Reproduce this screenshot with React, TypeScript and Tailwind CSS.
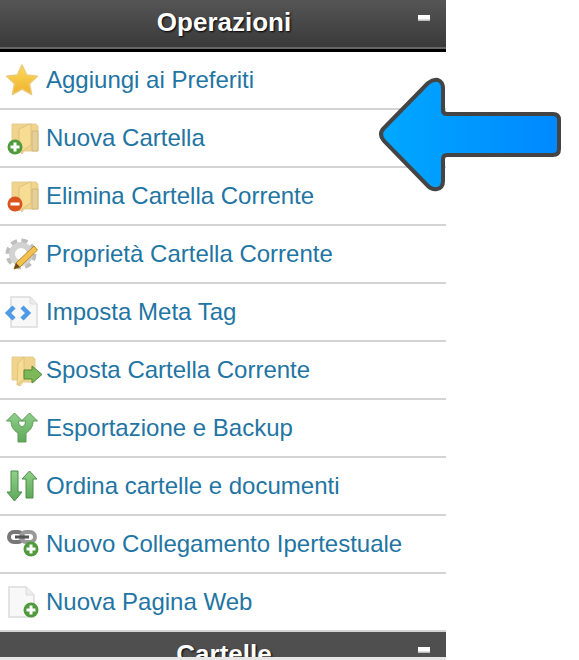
const Badge = ({ cx, cy, color, minus }: { cx: number; cy: number; color: string; minus?: boolean }) => (
  <g>
    <circle cx={cx} cy={cy} r="7.500" fill={color} />
    <rect x={cx - 4.500} y={cy - 1.500} width="9" height="3" fill="#fff" />
    {!minus && <rect x={cx - 1.500} y={cy - 4.500} width="3" height="9" fill="#fff" />}
  </g>
);

const Folder = () => (
  <g>
    <path d="M6 2h24l2 2v25H18l-2 3-1-1V26H6z" fill="#f0d48c" stroke="#e3cc94" strokeWidth="1" />
    <path d="M26 9h6v20H26z" fill="#e6cf96" stroke="#c9b27a" strokeWidth="0.800" />
    <path d="M13 7l11-5h1v21l-12 8z" fill="#f7dc94" stroke="#d9bd78" strokeWidth="0.800" />
  </g>
);

const Star = () => (
  <svg width="32" height="32" viewBox="0 0 32 32" className="overflow-visible">
    <path d="M16 1l4.700 10 10.700 1.300-7.900 7.400 2.100 10.800L16 25.200 6.400 30.500l2.100-10.800L.6 12.300 11.300 11z" fill="url(#star)" stroke="#eccb78" strokeWidth="1.500" strokeLinejoin="round" />
  </svg>
);

const NewFolder = ({ minus }: { minus?: boolean }) => (
  <svg width="32" height="32" viewBox="0 0 32 32" className="overflow-visible">
    <Folder />
    <Badge cx={9} cy={minus ? 24 : 25} color={minus ? "#d9541e" : "#4f9a3c"} minus={minus} />
  </svg>
);

const Gear = () => (
  <svg width="32" height="32" viewBox="0 0 32 32" className="overflow-visible">
    <circle cx="15" cy="16" r="13" fill="none" stroke="#bdbdbd" strokeWidth="5" strokeDasharray="6 4.200" />
    <circle cx="15" cy="16" r="9" fill="none" stroke="#d2d2d2" strokeWidth="6" />
    <path d="M28 8l3.500 4L14 29l-6 2 2-6z" fill="#f2c14e" stroke="#b98a25" strokeWidth="1" strokeLinejoin="round" />
    <path d="M8 31l2-6 4 4z" fill="#6b4a1e" />
  </svg>
);

const MetaPage = () => (
  <svg width="32" height="32" viewBox="0 0 32 32" className="overflow-visible">
    <path d="M5 1h19l7 7v23H5z" fill="#f8f8f8" stroke="#dcdcdc" strokeWidth="1.500" />
    <path d="M24 1v7h7" fill="#ececec" stroke="#dcdcdc" strokeWidth="1" />
    <path d="M8 11l-6 6 6 6M16 11l6 6-6 6" fill="none" stroke="#4f9be8" strokeWidth="4.500" />
  </svg>
);

const MoveFolder = () => (
  <svg width="32" height="32" viewBox="0 0 32 32" className="overflow-visible">
    <path d="M6 3h21l2 2v23H17l-3 4-2-1v-5H6z" fill="#f0d48c" stroke="#e3cc94" strokeWidth="1" />
    <path d="M12 9l-1 22 6-5h1V3z" fill="#f7dc94" stroke="#d9bd78" strokeWidth="0.800" />
    <path d="M18 16h8v-4l10 8.500-10 8.500v-4h-8z" fill="#7cb85a" stroke="#4d8a35" strokeWidth="1" strokeLinejoin="round" />
  </svg>
);

const Fork = () => (
  <svg width="32" height="32" viewBox="0 0 32 32" className="overflow-visible">
    <path d="M8.500 1L.5 9h4.500c0 5 2 9 7 12v9h8v-9c5-3 7-7 7-12h4.500l-8-8-8 8h4c0 3-1 5-3.500 6-2.500-1-3.500-3-3.500-6h4z" fill="url(#green)" stroke="#5d9a58" strokeWidth="1" strokeLinejoin="round" />
  </svg>
);

const Sort = () => (
  <svg width="32" height="32" viewBox="0 0 32 32" className="overflow-visible">
    <path d="M5 1h7v21h4L8.500 31 1 22h4z" fill="url(#green)" stroke="#4a8c45" strokeWidth="1" strokeLinejoin="round" />
    <path d="M20 28h7V9h4l-7.500-8L16 9h4z" fill="url(#green)" stroke="#4a8c45" strokeWidth="1" strokeLinejoin="round" />
  </svg>
);

const Link = () => (
  <svg width="32" height="32" viewBox="0 0 32 32" className="overflow-visible">
    <rect x="3" y="4" width="14" height="10" rx="5" fill="none" stroke="#777" strokeWidth="4" />
    <rect x="15" y="4" width="14" height="10" rx="5" fill="none" stroke="#999" strokeWidth="4" />
    <rect x="9" y="7.500" width="14" height="3" fill="#555" />
    <Badge cx={25} cy={21} color="#4f9a3c" />
  </svg>
);

const NewPage = () => (
  <svg width="32" height="32" viewBox="0 0 32 32" className="overflow-visible">
    <path d="M3 1h17l8 8v22H3z" fill="#f8f8f8" stroke="#dcdcdc" strokeWidth="1.500" />
    <path d="M20 1v8h8" fill="#ececec" stroke="#dcdcdc" strokeWidth="1" />
    <Badge cx={25} cy={24} color="#4f9a3c" />
  </svg>
);

const rows = [
  { label: "Aggiungi ai Preferiti", icon: <Star /> },
  { label: "Nuova Cartella", icon: <NewFolder /> },
  { label: "Elimina Cartella Corrente", icon: <NewFolder minus /> },
  { label: "Proprietà Cartella Corrente", icon: <Gear /> },
  { label: "Imposta Meta Tag", icon: <MetaPage /> },
  { label: "Sposta Cartella Corrente", icon: <MoveFolder /> },
  { label: "Esportazione e Backup", icon: <Fork /> },
  { label: "Ordina cartelle e documenti", icon: <Sort /> },
  { label: "Nuovo Collegamento Ipertestuale", icon: <Link /> },
  { label: "Nuova Pagina Web", icon: <NewPage /> },
];

const Minus = () => (
  <span className="absolute right-[16px] top-[15px] h-[6px] w-[12px] bg-gradient-to-b from-white from-60% to-[#aaaaaa]" />
);

export default function App() {
  return (
    <div className="relative h-[660px] w-[579px] overflow-hidden bg-white font-['Liberation_Sans',Arial,sans-serif]">
      <svg width="0" height="0" className="absolute">
        <defs>
          <linearGradient id="star" x1="0" y1="0" x2="0" y2="1">
            <stop offset="0" stopColor="#fbdc5c" />
            <stop offset="1" stopColor="#f0b02c" />
          </linearGradient>
          <linearGradient id="green" x1="0" y1="0" x2="0" y2="1">
            <stop offset="0" stopColor="#8fd08a" />
            <stop offset="1" stopColor="#5fa85a" />
          </linearGradient>
          <linearGradient id="arrow" x1="0" y1="0" x2="1" y2="0">
            <stop offset="0" stopColor="#00a8ff" />
            <stop offset="1" stopColor="#0088ff" />
          </linearGradient>
        </defs>
      </svg>

      <div className="w-[446px]">
        <div className="relative h-[52px] border-b-[3px] border-black">
          <div className="h-[47px] bg-gradient-to-b from-[#555555] to-[#3a3a3a] pl-[2px] pt-[4px] text-center text-[26px] font-bold leading-[36px] text-white [text-shadow:1px_1px_2px_#000]">
            Operazioni
          </div>
          <div className="h-[2px] bg-[#666666]" />
          <Minus />
        </div>

        {rows.map((row) => (
          <div key={row.label} className="flex h-[58px] items-center gap-[8px] border-b-2 border-[#d3d3d3] pl-[6px] text-[24px] text-[#1f75a3]">
            <span className="h-[32px] w-[32px] shrink-0 blur-[0.5px]">{row.icon}</span>
            <span>{row.label}</span>
          </div>
        ))}

        <div className="relative h-[25px] overflow-hidden bg-[#4f4f4f] pl-[2px] pt-[4px] text-center text-[26px] font-bold leading-[36px] text-white [text-shadow:1px_1px_2px_#000]">
          Cartelle
          <Minus />
        </div>
        <div className="h-[3px] bg-[#e6e6e6]" />
      </div>

      <svg width="190" height="120" viewBox="376 74 190 120" className="absolute left-[376px] top-[74px]">
        <path
          d="M384 128L428 83Q433 79 438 80Q443 82 443 88L443 110Q443 114 447 114L553 114Q559 114 559 120L559 149Q559 155 553 155L447 155Q443 155 443 159L443 181Q443 188 437 189Q432 190 428 186L384 141Q378 134 384 128Z"
          fill="url(#arrow)"
          stroke="#444444"
          strokeWidth="4"
        />
      </svg>
    </div>
  );
}
